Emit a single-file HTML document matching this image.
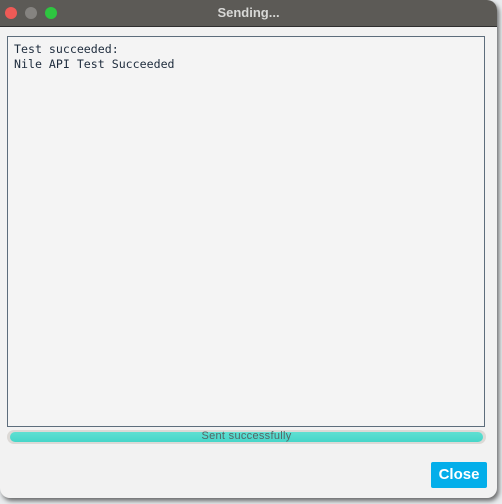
<!DOCTYPE html>
<html><head><meta charset="utf-8"><style>
html,body{margin:0;padding:0;width:502px;height:504px;background:#e9ecee;overflow:hidden;font-family:"Liberation Sans",sans-serif}
.win{position:absolute;left:0;top:0;width:497px;height:498px;background:#f2f2f2;border-radius:0 10px 10px 10px;box-shadow:2px 3px 5px rgba(0,0,0,.55);overflow:hidden}
.title{position:absolute;left:0;top:0;width:497px;height:26px;background:#5c5a56;border-bottom:1px solid #2e2e2e}
.dot{position:absolute;top:7px;width:12px;height:12px;border-radius:50%}
.t{position:absolute;left:0;width:497px;top:5px;text-align:center;color:#d8d8d6;font-weight:bold;font-size:13px}
.ta{position:absolute;left:7px;top:36px;width:478px;height:391px;border:1px solid #5d6d7c;background:#f4f4f4;font-family:"DejaVu Sans Mono",monospace;font-size:11.6px;color:#1d2b3c;line-height:15px;padding:5px 6px;box-sizing:border-box}
.pb{position:absolute;left:7px;top:430px;width:479px;height:14px;border-radius:7px;background:#dcd9d6}
.pf{position:absolute;left:3px;top:2px;right:3px;bottom:2px;border-radius:5px;background:linear-gradient(#5fe0d2,#46d6c9)}
.pt{position:absolute;left:0;width:479px;top:0;text-align:center;font-size:11px;letter-spacing:0.3px;line-height:13px;color:#556565}
.btn{position:absolute;left:431px;top:462px;width:56px;height:26px;background:#03aeea;border-radius:2px;color:#fff;font-weight:bold;font-size:15px;text-align:center;line-height:26px}
</style></head><body>
<div class="win">
<div class="title">
<div class="dot" style="left:5px;background:#ee5a56"></div>
<div class="dot" style="left:25px;background:#858380"></div>
<div class="dot" style="left:45px;background:#2ec540"></div>
<div class="t">Sending...</div>
</div>
<div class="ta">Test succeeded:<br>Nile API Test Succeeded</div>
<div class="pb"><div class="pf"></div><div class="pt">Sent successfully</div></div>
<div class="btn">Close</div>
</div>
</body></html>
